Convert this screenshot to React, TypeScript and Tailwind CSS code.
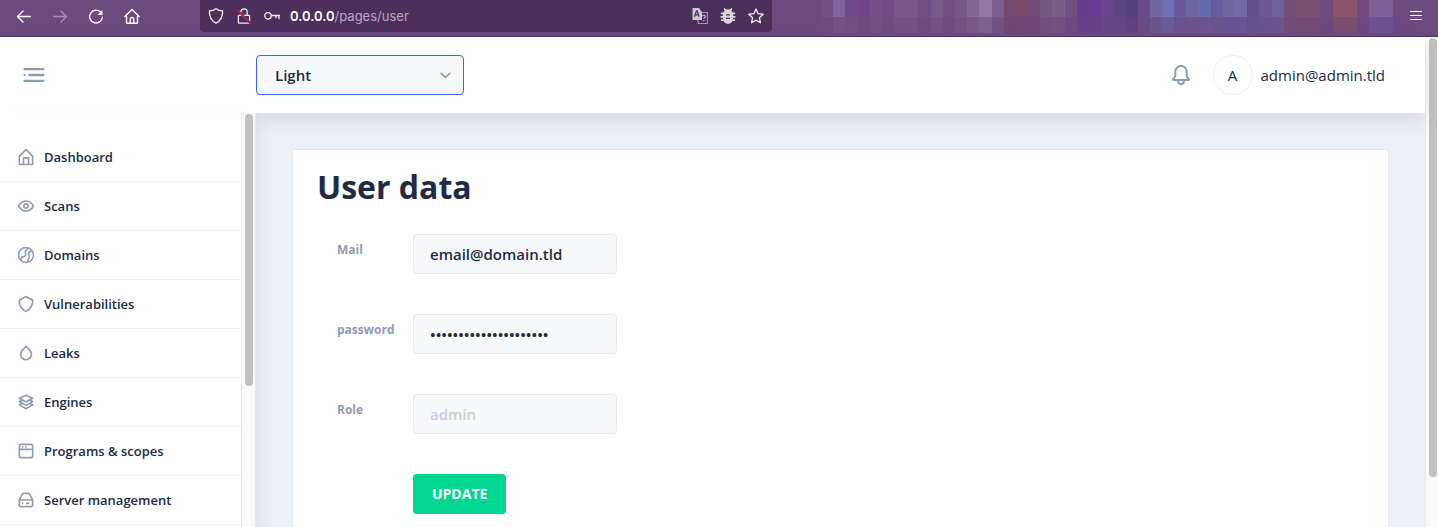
import React from "react";

const OPEN = "font-['Open_Sans',sans-serif]";

type IconProps = { className?: string };

const MenuIcon = ({ className }: IconProps) => (
  <svg viewBox="0 0 24 24" fill="currentColor" className={className} aria-hidden="true">
    <circle cx="4" cy="12" r="1" />
    <rect x="7" y="11" width="14" height="2" rx="0.94" />
    <rect x="3" y="16" width="18" height="2" rx="0.94" />
    <rect x="3" y="6" width="18" height="2" rx="0.94" />
  </svg>
);

const BellIcon = ({ className }: IconProps) => (
  <svg viewBox="0 0 24 24" fill="currentColor" className={className} aria-hidden="true">
    <path d="M20.52 15.21l-1.8-1.81V8.94a6.86 6.86 0 0 0-5.82-6.88 6.74 6.74 0 0 0-7.62 6.67v4.67l-1.8 1.81A1.64 1.64 0 0 0 4.64 18H8v.34A3.84 3.84 0 0 0 12 22a3.84 3.84 0 0 0 4-3.66V18h3.36a1.64 1.64 0 0 0 1.16-2.79zM14 18.34A1.88 1.88 0 0 1 12 20a1.88 1.88 0 0 1-2-1.66V18h4zM5.51 16l1.18-1.18a2 2 0 0 0 .59-1.42V8.73A4.73 4.73 0 0 1 8.9 5.17 4.67 4.67 0 0 1 12.64 4a4.86 4.86 0 0 1 4.08 4.9v4.5a2 2 0 0 0 .58 1.42L18.49 16z" />
  </svg>
);

const menuItems: { label: string; icon: React.ReactNode }[] = [
  {
    label: "Dashboard",
    icon: (
      <path d="M20.42 10.18L12.71 2.3a1 1 0 0 0-1.42 0l-7.71 7.89A2 2 0 0 0 3 11.62V20a2 2 0 0 0 1.89 2h14.22A2 2 0 0 0 21 20v-8.38a2.07 2.07 0 0 0-.58-1.44zM10 20v-6h4v6zm9 0h-3v-7a1 1 0 0 0-1-1H9a1 1 0 0 0-1 1v7H5v-8.42l7-7.15 7 7.19z" />
    ),
  },
  {
    label: "Scans",
    icon: (
      <>
        <path d="M21.87 11.5c-.64-1.11-4.16-6.68-10.14-6.5-5.53.14-8.73 5-9.6 6.5a1 1 0 0 0 0 1c.63 1.09 4 6.5 9.89 6.5h.25c5.53-.14 8.74-5 9.6-6.5a1 1 0 0 0 0-1zM12.22 17c-4.31.1-7.12-3.59-8-5 1-1.61 3.61-4.9 7.61-5 4.29-.11 7.11 3.59 8 5-1.03 1.61-3.61 4.9-7.61 5z" />
        <path d="M12 8.5a3.5 3.5 0 1 0 3.5 3.5A3.5 3.5 0 0 0 12 8.5zm0 5a1.5 1.5 0 1 1 1.5-1.5 1.5 1.5 0 0 1-1.5 1.5z" />
      </>
    ),
  },
  {
    label: "Domains",
    icon: (
      <g fill="none" stroke="currentColor" strokeWidth="1.9">
        <circle cx="12" cy="12" r="9" />
        <path d="M14.5 3.5c-.6 1.8-3.3 2.3-3.3 5 0 1.8.8 2.6.2 4.2-.9 2.3-3.6 1-4.8 2.1-.9.9-.8 2.200-.7 3.600M19.300 7c-1.500.2-3.600 1.200-4 3.200-.4 1.800.6 2.800.4 4.800-.2 2-1.700 2.600-1.700 5.400" />
      </g>
    ),
  },
  {
    label: "Vulnerabilities",
    icon: (
      <path d="M12 21.85a2 2 0 0 1-1-.25l-.3-.17A15.17 15.17 0 0 1 3 8.23v-.14a2 2 0 0 1 1-1.75l7-3.94a2 2 0 0 1 2 0l7 3.94a2 2 0 0 1 1 1.75v.14a15.17 15.17 0 0 1-7.72 13.2l-.3.17a2 2 0 0 1-.98.25zm0-17.7L5 8.09v.14a13.15 13.15 0 0 0 6.7 11.45l.3.17.3-.17A13.15 13.15 0 0 0 19 8.23v-.14z" />
    ),
  },
  {
    label: "Leaks",
    icon: (
      <path d="M12 21.1a7.4 7.4 0 0 1-5.28-2.28 7.73 7.73 0 0 1 .1-10.77l4.64-4.65a.94.94 0 0 1 .71-.3 1 1 0 0 1 .71.31l4.56 4.72a7.73 7.73 0 0 1-.09 10.77A7.33 7.33 0 0 1 12 21.1zm.13-15.57L8.24 9.45a5.74 5.74 0 0 0-.07 8A5.43 5.43 0 0 0 12 19.1a5.42 5.42 0 0 0 3.9-1.61 5.72 5.72 0 0 0 .06-8z" />
    ),
  },
  {
    label: "Engines",
    icon: (
      <path d="M21 11.35a1 1 0 0 0-.61-.86l-2.15-.92 2.26-1.3a1 1 0 0 0 .5-.92 1 1 0 0 0-.61-.86l-8-3.41a1 1 0 0 0-.78 0l-8 3.41a1 1 0 0 0-.61.86 1 1 0 0 0 .5.92l2.26 1.3-2.15.92a1 1 0 0 0-.61.86 1 1 0 0 0 .5.92l2.26 1.3-2.15.92a1 1 0 0 0-.61.86 1 1 0 0 0 .5.92l8 4.6a1 1 0 0 0 1 0l8-4.6a1 1 0 0 0 .5-.92 1 1 0 0 0-.61-.86l-2.15-.92 2.26-1.3a1 1 0 0 0 .5-.92zm-9-6.26l5.76 2.45L12 10.85 6.24 7.54zm-.5 7.78a1 1 0 0 0 1 0l3.57-2 1.69.72L12 14.85l-5.76-3.31 1.69-.72zm6.26 2.67L12 18.85l-5.76-3.31 1.69-.72 3.57 2.05a1 1 0 0 0 1 0l3.57-2.05z" />
    ),
  },
  {
    label: "Programs & scopes",
    icon: (
      <>
        <path d="M18 3H6a3 3 0 0 0-3 3v12a3 3 0 0 0 3 3h12a3 3 0 0 0 3-3V6a3 3 0 0 0-3-3zM6 5h12a1 1 0 0 1 1 1v3H5V6a1 1 0 0 1 1-1zm12 14H6a1 1 0 0 1-1-1v-7h14v7a1 1 0 0 1-1 1z" />
        <circle cx="8" cy="7.03" r="1" />
        <circle cx="12" cy="7.03" r="1" />
      </>
    ),
  },
  {
    label: "Server management",
    icon: (
      <>
        <path d="M20.79 11.34l-3.34-6.68A3 3 0 0 0 14.76 3H9.24a3 3 0 0 0-2.69 1.66l-3.34 6.68a2 2 0 0 0-.21.9V18a3 3 0 0 0 3 3h12a3 3 0 0 0 3-3v-5.76a2 2 0 0 0-.21-.9zM8.34 5.55a1 1 0 0 1 .9-.55h5.52a1 1 0 0 1 .9.55L18.38 11H5.62zM18 19H6a1 1 0 0 1-1-1v-5h14v5a1 1 0 0 1-1 1z" />
        <rect x="12" y="15" width="4" height="2" />
        <circle cx="8" cy="16" r="1" />
      </>
    ),
  },
];

/* Blurred toolbar extensions: one colour per 12px column, in bands. */
const mosaicTop = [
  "#725085", "#82659a", "#6f4b85", "#714686", "#755088", "#704b86", "#765788", "#765788", "#6f4f84", "#765a88",
  "#6f4f86", "#75578a", "#836797", "#9278a3", "#7c5e90", "#74486f", "#7b4768", "#714a74", "#73577f", "#785e85",
  "#6e5082", "#643f8f", "#683c98", "#6b468e", "#5e4584", "#574280", "#6a4d86", "#7266a3", "#7070b3", "#685a9a",
  "#6a66a2", "#656cb0", "#645c9f", "#7064a1", "#7168a8", "#644f8e", "#6d5896", "#6d629c", "#724e7c", "#7b516f",
  "#7a5073", "#6f4a7c", "#885468", "#885468", "#704a80", "#7d5f98", "#7d5f98", "#6d4a82",
];
const mosaicMid = [
  "#6d4a80", "#725184", "#704f83", "#6d4b81", "#715083", "#6d4c81", "#725185", "#725185", "#6d4b81", "#725185",
  "#6d4c81", "#725185", "#775888", "#7d618e", "#735385", "#6e4777", "#6f4874", "#6e4978", "#704f7d", "#71527f",
  "#6c4b80", "#664287", "#66428a", "#694787", "#644681", "#624380", "#6b4b83", "#69568f", "#685c98", "#6a5290",
  "#6d5488", "#6d568c", "#68558f", "#665494", "#675596", "#665090", "#68518f", "#6c548e", "#704b7c", "#744c73",
  "#734b77", "#6d4a7c", "#784d70", "#784d70", "#6d4a7d", "#6c5090", "#6a4f92", "#6b4a83",
];

const Mosaic = () => (
  <svg width="579" height="37" viewBox="0 0 579 37" shapeRendering="crispEdges" className="shrink-0" aria-hidden="true">
    <rect width="579" height="37" fill="#6d4b81" />
    {mosaicTop.map((c, i) => (
      <rect key={"t" + i} x={i * 12.18} y="0" width="12.3" height="17" fill={c} />
    ))}
    {mosaicMid.map((c, i) => (
      <rect key={"m" + i} x={i * 12.18} y="17" width="12.3" height="16" fill={c} />
    ))}
  </svg>
);

const BrowserBar = () => (
  <div className="flex h-[37px] shrink-0 border-b border-[#4d2f5c] bg-[#6c4a80] text-white">
    <div className="flex w-[200px] shrink-0 items-start gap-5 pt-2 pl-4">
      <button aria-label="Back" className="h-4 w-4">
        <svg viewBox="0 0 16 16" className="h-4 w-4" fill="none" stroke="#fff" strokeWidth="1.4" strokeLinecap="round" strokeLinejoin="round">
          <path d="M14.500 8.500H1.700M7 3L1.500 8.500 7 14" />
        </svg>
      </button>
      <button aria-label="Forward" className="h-4 w-4">
        <svg viewBox="0 0 16 16" className="h-4 w-4" fill="none" stroke="#a48fb0" strokeWidth="1.4" strokeLinecap="round" strokeLinejoin="round">
          <path d="M1.500 8.500h12.800M9 3l5.500 5.500L9 14" />
        </svg>
      </button>
      <button aria-label="Reload" className="h-4 w-4">
        <svg viewBox="0 0 16 16" className="h-4 w-4" fill="none" stroke="#fff" strokeWidth="1.4" strokeLinecap="round" strokeLinejoin="round">
          <path d="M14.400 9.200A6.400 6.400 0 1 1 12.500 4" />
          <path d="M14.400 2v5H9.500z" fill="#fff" stroke="none" />
        </svg>
      </button>
      <button aria-label="Home" className="h-4 w-4">
        <svg viewBox="0 0 16 16" className="h-4 w-4" fill="none" stroke="#fff" strokeWidth="1.4" strokeLinecap="round" strokeLinejoin="round">
          <path d="M.8 8.500L8 1.500l7.200 7M2.500 7.500V14.500a.8.800 0 0 0 .8.800h9.400a.8.800 0 0 0 .8-.8V7.500M6.300 15v-3.800a1.700 1.700 0 0 1 3.400 0V15" />
        </svg>
      </button>
    </div>
    <div className="flex h-8 w-[572px] shrink-0 items-center gap-3 rounded-b-sm bg-[#4d2f5c] px-2">
      <svg viewBox="0 0 16 16" className="h-4 w-4 shrink-0" fill="none" stroke="#f2eef4" strokeWidth="1.3" strokeLinejoin="round" aria-hidden="true">
        <path d="M8 .8c2 1.400 4.300 2.100 6.700 2.200 0 5.500-1.700 9.700-6.700 12.200C3 12.700 1.300 8.500 1.300 3 3.700 2.900 6 2.200 8 .8z" />
      </svg>
      <svg viewBox="0 0 16 16" className="h-4 w-4 shrink-0" fill="none" stroke="#f2eef4" strokeWidth="1.3" strokeLinejoin="round" aria-hidden="true">
        <path d="M3.200 7.300h9.600a.8.800 0 0 1 .8.800v6.300a.8.800 0 0 1-.8.800H3.200a.8.800 0 0 1-.8-.8V8.100a.8.800 0 0 1 .8-.8zM4.800 7V4a3.200 3.200 0 0 1 6.400 0v3" />
        <path d="M1.200 2L14.800 15.600" stroke="#4d2f5c" strokeWidth="2.2" />
        <path d="M1.200 2L14.800 15.600" stroke="#e2174c" strokeWidth="1.3" />
      </svg>
      <svg viewBox="0 0 16 16" className="h-4 w-4 shrink-0" fill="none" stroke="#f2eef4" strokeWidth="1.3" aria-hidden="true">
        <circle cx="4" cy="7.8" r="3.2" />
        <path d="M7.200 7.500H16M12 7.500v2.700M15 7.500v3.800" />
      </svg>
      <p className="-ml-0.5 flex-1 pt-0.5 font-['Inter',sans-serif] text-[13px] text-[#b8a6c2]">
        <span className="font-semibold text-white">0.0.0.0</span>/pages/user
      </p>
      <svg viewBox="0 0 16 16" className="h-4 w-4 shrink-0" aria-hidden="true">
        <path d="M.5 0h6.500l3 4v8H.5z" fill="#cfc6d4" />
        <path d="M2.500 8.800L4.500 2.800h.6l2 6M3.200 6.800h3.200" fill="none" stroke="#4d2f5c" strokeWidth="1.2" />
        <path d="M10 4.500h5.400v11H6.500L5.700 12" fill="none" stroke="#a594b0" strokeWidth="1.1" />
        <path d="M10.600 8.200c.3-1.300 2.700-1.300 2.700.2 0 1.200-1.400 1.100-1.400 2.400M11.900 12v1.200" fill="none" stroke="#cfc6d4" strokeWidth="1.1" />
      </svg>
      <svg viewBox="0 0 16 16" className="h-4 w-4 shrink-0" fill="#dcd8de" aria-hidden="true">
        <path d="M4.500 0l1.700 1.500a5 5 0 0 1 3.600 0L11.500 0l1 1-1.300 1.400A5 5 0 0 1 12.600 4.500H15v1.800h-1.900V8H15.500v1.800h-2.400v1.500H15v1.800h-2.500a5 5 0 0 1-9 0H1v-1.800h1.900V9.800H.5V8h2.400V6.300H1V4.500h2.400A5 5 0 0 1 4.800 2.400L3.500 1z" />
        <path d="M6 6.200h4v1.400H6zM6 9.700h4v1.400H6z" fill="#4d2f5c" />
      </svg>
      <svg viewBox="0 0 16 16" className="h-4 w-4 shrink-0" fill="none" stroke="#f2eef4" strokeWidth="1.3" strokeLinejoin="round" aria-hidden="true">
        <path d="M8 1l2.100 4.700 5.100.5-3.800 3.500 1.100 5.100L8 12.200l-4.500 2.600 1.100-5.100L.8 6.200l5.100-.5z" />
      </svg>
    </div>
    <div className="flex min-w-0 flex-1 justify-end overflow-hidden">
      <Mosaic />
      <button aria-label="Open menu" className="flex w-[38px] shrink-0 justify-start pt-2 pl-2">
        <svg viewBox="0 0 16 16" className="h-4 w-4" stroke="#fff" strokeWidth="1.2" aria-hidden="true">
          <path d="M2 3.500h12M2 7.500h12M2 11.500h12" />
        </svg>
      </button>
    </div>
  </div>
);

const fieldClass =
  "h-10 w-[204px] rounded border border-[#e4e9f2] bg-[#f7f9fc] px-4 text-[15px] font-semibold leading-6 text-[#222b45] outline-none";

const Field = ({ id, label, children }: { id: string; label: string; children: React.ReactNode }) => (
  <div className="flex items-start">
    <label htmlFor={id} className="w-[76px] shrink-0 pt-2 text-xs leading-4 font-bold text-[#8f9bb3]">
      {label}
    </label>
    {children}
  </div>
);

export default function App() {
  return (
    <div className={`${OPEN} flex h-screen flex-col overflow-hidden bg-white text-[#222b45]`}>
      <BrowserBar />
      <div className="flex min-h-0 flex-1">
        <div className="flex min-w-0 flex-1 flex-col">
          <header className="z-10 flex h-[76px] shrink-0 items-center bg-white pr-10 pl-5 shadow-[0_8px_16px_0_rgba(44,64,62,0.1)]">
            <div className="w-[236px] shrink-0">
              <button aria-label="Toggle sidebar" className="block text-[#8f9bb3]">
                <MenuIcon className="h-7 w-7" />
              </button>
            </div>
            <div className="relative w-[208px]">
              <select
                aria-label="Theme"
                defaultValue="Light"
                className="h-10 w-full appearance-none rounded border border-[#3366ff] bg-[#f7f9fc] px-[18px] text-[15px] font-semibold text-[#222b45] outline-none"
              >
                <option>Light</option>
                <option>Dark</option>
              </select>
              <svg viewBox="0 0 20 20" className="pointer-events-none absolute top-2.5 right-2 h-5 w-5 text-[#8f9bb3]" fill="none" stroke="currentColor" strokeWidth="1.7" strokeLinecap="round" strokeLinejoin="round" aria-hidden="true">
                <path d="M5.300 8.300L9.500 12.300l4.200-4" />
              </svg>
            </div>
            <div className="ml-auto flex items-center">
              <button aria-label="Notifications" className="mr-5 text-[#8f9bb3]">
                <BellIcon className="h-6 w-6" />
              </button>
              <span className="mr-2 flex h-10 w-10 items-center justify-center rounded-full border border-[#edf1f7] text-[15px] font-medium">
                A
              </span>
              <span className="text-[15px] leading-6">admin@admin.tld</span>
            </div>
          </header>
          <div className="flex min-h-0 flex-1">
            <nav className="z-20 flex w-64 shrink-0 bg-white shadow-[0_8px_16px_0_rgba(44,51,73,0.1)]" aria-label="Main">
              <ul className="min-w-0 flex-1 overflow-hidden pt-5">
                {menuItems.map((item) => (
                  <li key={item.label} className="border-b border-[#edf1f7]">
                    <a href="#" className="flex h-12 items-center gap-2 px-4 text-[13px] font-semibold">
                      <svg viewBox="0 0 24 24" fill="currentColor" className="h-5 w-5 text-[#8f9bb3]" aria-hidden="true">
                        {item.icon}
                      </svg>
                      <span className="pt-0.5">{item.label}</span>
                    </a>
                  </li>
                ))}
              </ul>
              <div className="w-[15px] shrink-0 border-x border-[#e8e8e8] bg-[#fafafa] px-[3px] pt-px">
                <div className="h-[272px] w-2 rounded-full bg-[#c1c1c1]" />
              </div>
            </nav>
            <main className="min-w-0 flex-1 overflow-hidden bg-[#ebeff7] px-9 pt-9">
              <section className="min-h-full rounded border border-[#e4e9f2] bg-white px-6 py-4">
                <h1 className="text-[32px] leading-[42px] font-bold">User data</h1>
                <form className="flex flex-col gap-10 px-5 pt-[26px]" onSubmit={(e) => e.preventDefault()}>
                  <Field id="mail" label="Mail">
                    <input id="mail" type="text" defaultValue="email@domain.tld" className={fieldClass} />
                  </Field>
                  <Field id="password" label="password">
                    <input id="password" type="password" defaultValue="aaaaaaaaaaaaaaaaaaaaa" className={fieldClass} />
                  </Field>
                  <Field id="role" label="Role">
                    <input id="role" type="text" placeholder="admin" disabled className={`${fieldClass} placeholder:text-[#c5cee0]`} />
                  </Field>
                  <button type="submit" className="mb-6 ml-[76px] h-10 self-start rounded bg-[#00d68f] px-[19px] text-sm font-bold text-white">
                    UPDATE
                  </button>
                </form>
              </section>
            </main>
          </div>
        </div>
        <div className="w-[13px] shrink-0 border-l border-[#e8e8e8] bg-[#fafafa] pt-px pl-[3px]">
          <div className="h-[439px] w-2 rounded-full bg-[#c1c1c1]" />
        </div>
      </div>
    </div>
  );
}
